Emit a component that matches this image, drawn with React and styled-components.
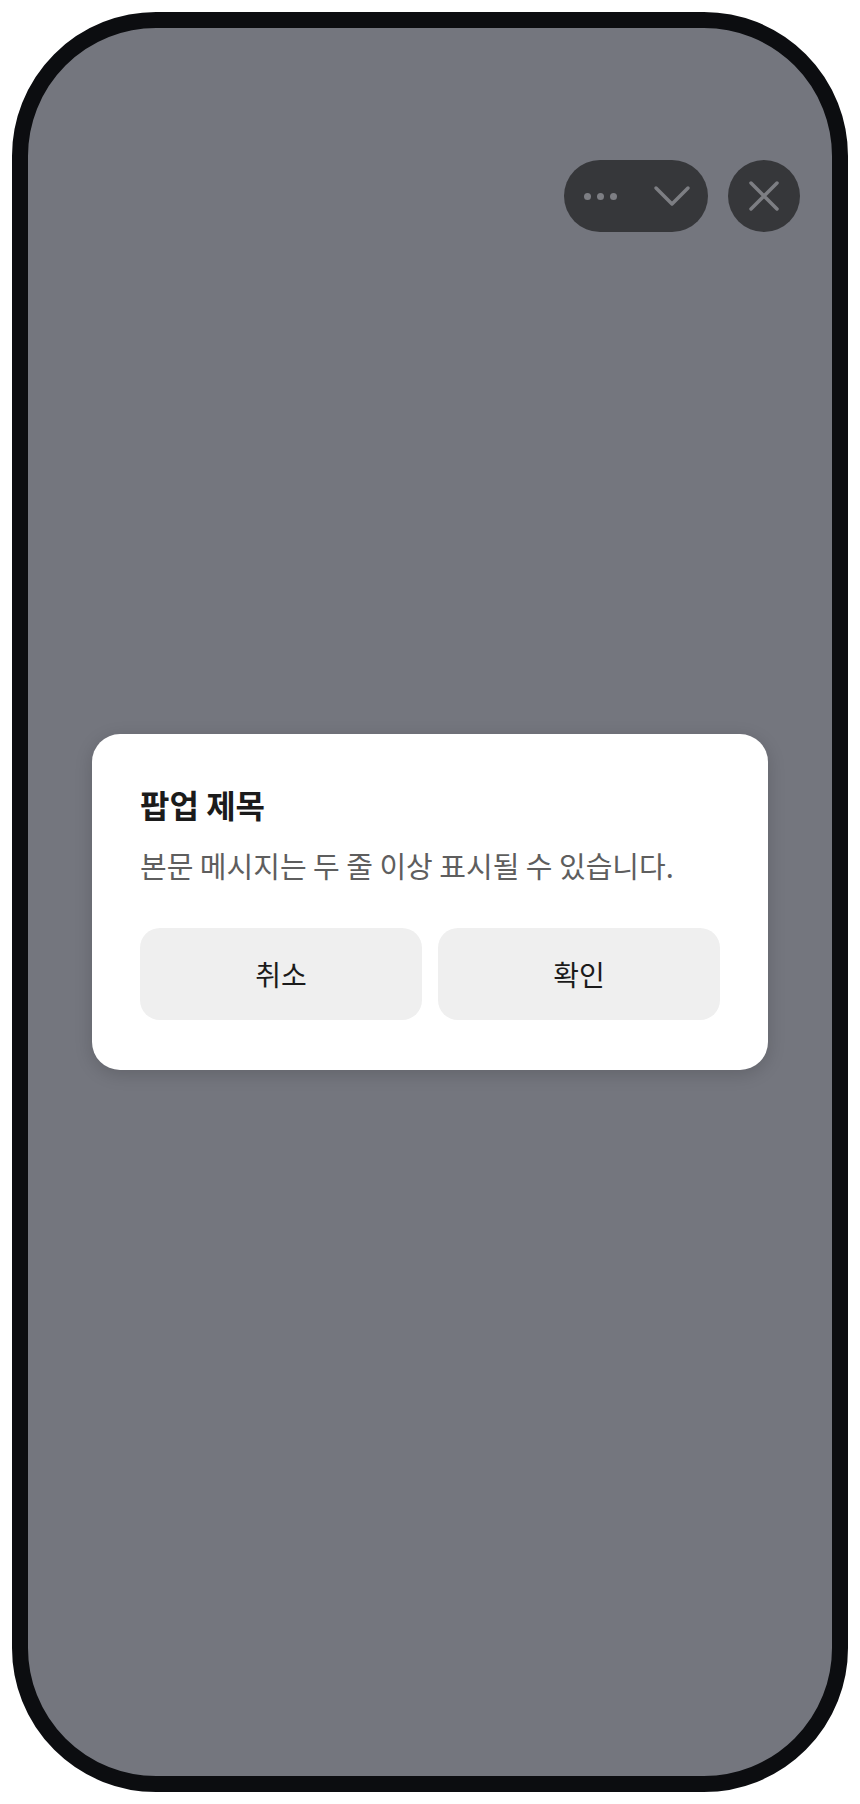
import styled, { createGlobalStyle } from 'styled-components'

const GlobalStyle = createGlobalStyle`
	html, body {
		margin: 0;
		padding: 0;
		background: #ffffff;
		font-family: 'Noto Sans CJK KR', 'Noto Sans', sans-serif;
	}
	* {
		box-sizing: border-box;
	}
`

const Page = styled.div`
	padding: 12px;
`

const Phone = styled.div`
	height: 1780px;
	border: 16px solid #0c0d10;
	border-radius: 144px;
	background-color: #74767e;
	display: grid;
	grid-template-columns: 1fr;
	grid-template-rows: 1fr;
	overflow: hidden;
`

const CapsuleBar = styled.div`
	grid-area: 1 / 1;
	align-self: start;
	justify-self: end;
	margin-top: 132px;
	margin-right: 32px;
	display: flex;
	align-items: center;
	gap: 20px;
`

const Capsule = styled.div`
	width: 144px;
	height: 72px;
	border-radius: 36px;
	background-color: #36373a;
	display: flex;
`

const CapsuleHalf = styled.button`
	width: 72px;
	height: 72px;
	border: none;
	background: transparent;
	padding: 0;
	display: flex;
	align-items: center;
	justify-content: center;
	gap: 6px;
	cursor: pointer;
`

const Dot = styled.span`
	width: 7px;
	height: 7px;
	border-radius: 50%;
	background-color: #7d7e83;
`

const CloseButton = styled.button`
	width: 72px;
	height: 72px;
	border-radius: 50%;
	border: none;
	padding: 0;
	background-color: #36373a;
	display: flex;
	align-items: center;
	justify-content: center;
	cursor: pointer;
`

const Dialog = styled.div`
	grid-area: 1 / 1;
	align-self: center;
	justify-self: center;
	width: 676px;
	background-color: #ffffff;
	border-radius: 28px;
	padding: 48px 48px 50px;
	box-shadow: 0 4px 18px rgba(0, 0, 0, 0.16);
	display: flex;
	flex-direction: column;
`

const Title = styled.h2`
	margin: 0;
	font-size: 32px;
	line-height: 44px;
	font-weight: 700;
	color: #1b1b1b;
`

const Message = styled.p`
	margin: 18px 0 0;
	font-size: 29px;
	line-height: 42px;
	font-weight: 400;
	color: #5e5e5e;
`

const ButtonRow = styled.div`
	margin-top: 42px;
	display: grid;
	grid-template-columns: 1fr 1fr;
	gap: 16px;
`

const ActionButton = styled.button`
	height: 92px;
	border: none;
	border-radius: 20px;
	background-color: #efefef;
	font-family: 'Noto Sans CJK KR', 'Noto Sans', sans-serif;
	font-size: 28px;
	font-weight: 400;
	color: #1b1b1b;
	cursor: pointer;
`

const App = () => {
	return (
		<Page>
			<GlobalStyle />
			<Phone>
				<CapsuleBar>
					<Capsule>
						<CapsuleHalf aria-label="more">
							<Dot />
							<Dot />
							<Dot />
						</CapsuleHalf>
						<CapsuleHalf aria-label="minimize">
							<svg width="40" height="22" viewBox="0 0 40 22">
								<polyline
									points="4,3 20,19 36,3"
									fill="none"
									stroke="#7d7e83"
									strokeWidth="3.5"
									strokeLinecap="round"
									strokeLinejoin="round"
								/>
							</svg>
						</CapsuleHalf>
					</Capsule>
					<CloseButton aria-label="close">
						<svg width="32" height="32" viewBox="0 0 32 32">
							<path
								d="M3 3 L29 29 M29 3 L3 29"
								fill="none"
								stroke="#7d7e83"
								strokeWidth="3.5"
								strokeLinecap="round"
							/>
						</svg>
					</CloseButton>
				</CapsuleBar>

				<Dialog>
					<Title>팝업 제목</Title>
					<Message>본문 메시지는 두 줄 이상 표시될 수 있습니다.</Message>
					<ButtonRow>
						<ActionButton>취소</ActionButton>
						<ActionButton>확인</ActionButton>
					</ButtonRow>
				</Dialog>
			</Phone>
		</Page>
	)
}

export default App
